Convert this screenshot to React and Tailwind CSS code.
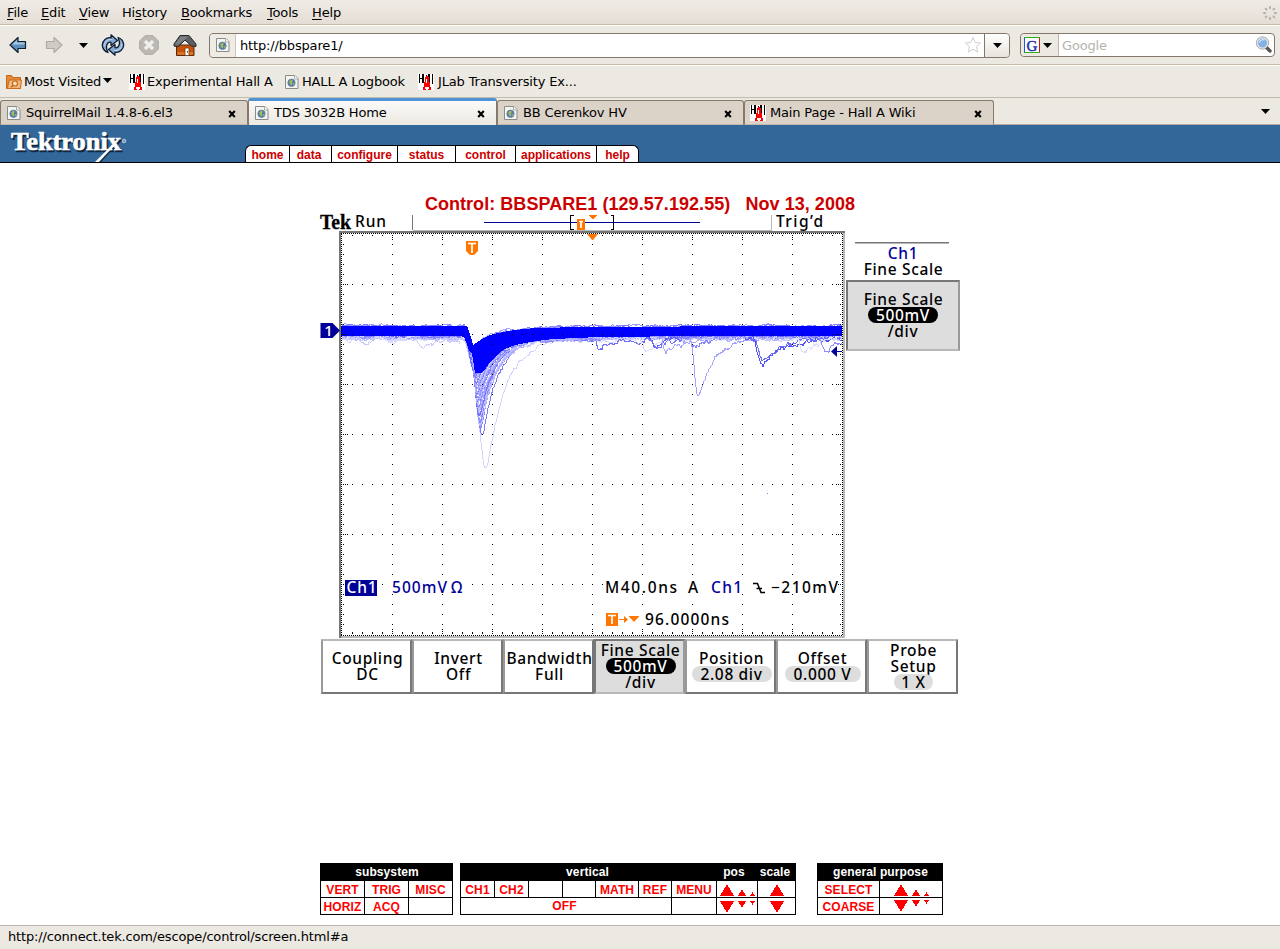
const sans = "font-['DejaVu_Sans',sans-serif]"
const arial = "font-['Liberation_Sans',Arial,sans-serif]"

/* ---------- browser icons ---------- */

function PageIcon({ className = '' }) {
  return (
    <svg width="16" height="16" viewBox="0 0 16 16" className={`shrink-0 ${className}`}>
      <path d="M1.5 1.5h9.5l3 3v10h-12.5z" fill="#f4f4f2" stroke="#8a8c88" />
      <path d="M10.5 1.5v3.5h3.5" fill="#fff" stroke="#a9aba7" />
      <circle cx="7.5" cy="8.8" r="3.7" fill="#4f79b0" stroke="#6d8296" strokeWidth="0.8" />
      <path d="M5.2 7.2l2-1.4 1.7.8-1 1.8.6 1.4-1.2 1.8-1.4-1.6z" fill="#a3bd58" />
      <path d="M9.2 9.3l1.4-.8-.3 2-1.1.8z" fill="#a3bd58" />
    </svg>
  )
}

function HallIcon({ className = '' }) {
  return (
    <svg width="16" height="16" viewBox="0 0 16 16" shapeRendering="crispEdges" className={`shrink-0 ${className}`}>
      <rect width="16" height="16" fill="#fff" />
      <path d="M1 0h1v9h-1zM4 0h2v9h-2zM2 4h2v1h-2zM10 0h2v10h-2zM14 0h1v10h-1zM8 1h1v2h-1z" fill="#000" />
      <path d="M7 2h3v1h1v5h1v5h1v3h-3v-1h1v-2h-4v2h1v1h-3v-3h1v-5h1v-5h1zM8 5v4h1v-4z" fill="#f00" fillRule="evenodd" />
    </svg>
  )
}

function Caret({ className = '' }) {
  return (
    <svg width="9" height="5" viewBox="0 0 9 5" className={`shrink-0 ${className}`}>
      <path d="M0 0h9L4.5 5z" fill="#000" />
    </svg>
  )
}

function BackIcon() {
  return (
    <svg width="18" height="18" viewBox="0 0 18 18">
      <path d="M1 9L9 1.5V5.500h7.500v7H9v4z" fill="#5f8dbd" stroke="#10202f" strokeWidth="1.200" strokeLinejoin="round" />
      <path d="M3 8.500L8 4v2.500h7.500v2z" fill="#a8c5e2" />
    </svg>
  )
}

function ForwardIcon() {
  return (
    <svg width="18" height="18" viewBox="0 0 18 18">
      <path d="M17 9L9 1.500V5.500H1.500v7H9v4z" fill="#cfccc6" stroke="#aeaba5" strokeWidth="1.200" strokeLinejoin="round" />
    </svg>
  )
}

// Two arrows chasing each other; the second is the first turned by 180 degrees.
function ReloadIcon() {
  const arrow = 'M7 18.500C1 16.500-.500 9.500 4 5.500 6 3.800 8.500 3.500 10 4V.800l6.500 5.700-6.500 5V8.300C6.500 7.500 3.800 12 7 18.500z'
  return (
    <svg width="24" height="22" viewBox="0 0 24 22">
      <g fill="#86abd2" stroke="#0d1c30" strokeWidth="1.300" strokeLinejoin="round">
        <path d={arrow} />
        <path d={arrow} transform="rotate(180 12 11)" />
      </g>
      <path d="M3.300 12c-.3-4 2.500-7 7.700-6.500M20.700 10c.3 4-2.500 7-7.700 6.500" fill="none" stroke="#c6daee" />
    </svg>
  )
}

function StopIcon() {
  return (
    <svg width="20" height="20" viewBox="0 0 20 20">
      <path d="M6 .700h8L19.300 6v8L14 19.300H6L.700 14V6z" fill="#bcb8b4" stroke="#aaa6a2" />
      <path d="M6 6l8 8M14 6l-8 8" stroke="#f1efeb" strokeWidth="3.200" />
    </svg>
  )
}

function HomeIcon() {
  return (
    <svg width="24" height="23" viewBox="0 0 24 23">
      <path d="M3.500 11h17.500v10.500H3.500z" fill="#c4520a" stroke="#5a2a08" />
      <path d="M4.500 18h15.500v3H4.500z" fill="#e07422" />
      <path d="M12 14h4v7.500h-4z" fill="#fff" stroke="#7a3a10" strokeWidth=".8" />
      <path d="M14.500 17v1.500" stroke="#333" />
      <path d="M7 1.500h9l7 8.500v2.500l-4.500-.5L12 6 5 12.800l-4-.8v-2z" fill="#5d6063" stroke="#26282a" strokeLinejoin="round" />
      <path d="M7.500 2.500h8l-3 2.500-7 5.500H2z" fill="#7d8184" />
    </svg>
  )
}

function FolderIcon() {
  return (
    <svg width="16" height="16" viewBox="0 0 16 16" className="shrink-0">
      <path d="M.5 14.500v-13h5l1.500 2h7.500v11z" fill="#e58a35" stroke="#c4651a" />
      <path d="M1.500 14.500l1.500-8.500h12.500l-1 8.500z" fill="#f3b878" stroke="#cb6d20" />
      <circle cx="9" cy="9.500" r="2.500" fill="#fbe3c6" stroke="#c4651a" strokeWidth="1.200" />
      <path d="M7 11.500L5 13.300" stroke="#c4651a" strokeWidth="1.400" />
    </svg>
  )
}

function CloseIcon() {
  return (
    <svg width="8" height="8" viewBox="0 0 8 8" className="mt-px shrink-0">
      <path d="M1.200 1l5.600 6M6.800 1L1.200 7" stroke="#000" strokeWidth="2.100" />
    </svg>
  )
}

function Throbber() {
  return (
    <svg width="16" height="16" viewBox="0 0 16 16" className="mt-px">
      {[0, 45, 90, 135, 180, 225, 270, 315].map((a) => (
        <rect key={a} x="7" y="1" width="2" height="3" rx="0.800" fill="#b3afaa" transform={`rotate(${a} 8 8)`} />
      ))}
    </svg>
  )
}

/* ---------- browser chrome ---------- */

const MENU = [
  ['', 'F', 'ile', 'w-[34px]'],
  ['', 'E', 'dit', 'w-[38px]'],
  ['', 'V', 'iew', 'w-[43px]'],
  ['Hi', 's', 'tory', 'w-[59px]'],
  ['', 'B', 'ookmarks', 'w-[86px]'],
  ['', 'T', 'ools', 'w-[45px]'],
  ['', 'H', 'elp', 'w-[40px]'],
]

function MenuBar() {
  return (
    <div className="flex h-[25px] items-center justify-between border-b border-[#c8bba8] bg-gradient-to-b from-[#efece6] to-[#e4ddd5] pl-[7px] pr-[2px]">
      <div className="flex pt-[2px]">
        {MENU.map(([pre, key, post, w]) => (
          <span key={key + post} className={`${w} whitespace-nowrap`}>
            {pre}
            <span className="underline underline-offset-2">{key}</span>
            {post}
          </span>
        ))}
      </div>
      <Throbber />
    </div>
  )
}

function ToolBar() {
  return (
    <div className="flex h-[40px] items-center border-b border-t border-b-[#c8bba8] border-t-white pl-[9px] pr-[5px]">
      <div className="flex w-[200px] items-center">
        <span className="w-[36px]"><BackIcon /></span>
        <span className="w-[34px]"><ForwardIcon /></span>
        <span className="w-[22px]"><Caret /></span>
        <span className="w-[38px]"><ReloadIcon /></span>
        <span className="w-[34px]"><StopIcon /></span>
        <HomeIcon />
      </div>
      <div className="flex h-[25px] w-[801px] items-stretch rounded border border-[#83766a] bg-white">
        <div className="flex w-[26px] items-center justify-center rounded-l border-r border-[#cfc6ba] bg-[#efece6]">
          <PageIcon />
        </div>
        <span className="flex flex-1 items-center pl-[4px] pt-px">http://bbspare1/</span>
        <svg width="18" height="18" viewBox="0 0 18 18" className="mr-[2px] self-center">
          <path d="M9 1.500l2.200 5 5.300.500-4 3.600 1.200 5.400L9 13.200 4.300 16l1.200-5.400-4-3.600 5.300-.5z" fill="#fff" stroke="#cfcfcf" strokeLinejoin="round" />
        </svg>
        <div className="flex w-[25px] items-center justify-center rounded-r border-l border-[#83766a] bg-gradient-to-b from-white to-[#e8e4dd]">
          <Caret />
        </div>
      </div>
      <div className="ml-[10px] flex h-[24px] w-[255px] items-stretch rounded border border-[#83766a] bg-white">
        <div className="flex w-[38px] items-center rounded-l border-r border-[#c0b5a8] bg-[#ece9e2] pl-[3px]">
          <svg width="16" height="16" viewBox="0 0 16 16">
            <path d="M0 0h16v16H0z" fill="#fff" />
            <path d="M.5 16V0" stroke="#1c5bd6" />
            <path d="M0 .5h16M0 15.500h16" stroke="#2fae23" />
            <path d="M15.500 1v14" stroke="#d61a1a" />
            <text x="8" y="13.500" textAnchor="middle" fontSize="15" letterSpacing="0" fill="#1b35a8" fontFamily="Liberation Serif" stroke="#1b35a8" strokeWidth="0.500">G</text>
          </svg>
          <Caret className="ml-[3px]" />
        </div>
        <span className="flex flex-1 items-center pl-[3px] pt-px text-[#b5b2ae]">Google</span>
        <svg width="18" height="18" viewBox="0 0 18 18" className="mr-[1px] self-center">
          <path d="M10.500 10.500l4.500 4.500" stroke="#555" strokeWidth="3.400" strokeLinecap="round" />
          <circle cx="7.500" cy="7" r="5.300" fill="#82b1e4" stroke="#e6e6e6" strokeWidth="1.500" />
          <circle cx="7.500" cy="7" r="6.200" fill="none" stroke="#888" strokeWidth=".7" />
          <path d="M4.500 6.500a3.500 3.500 0 0 1 5-2.500" stroke="#d6e8fa" fill="none" strokeWidth="1.300" />
        </svg>
      </div>
    </div>
  )
}

function BookmarksBar() {
  return (
    <div className="flex h-[33px] items-center border-b border-t border-b-[#c3bbae] border-t-white pl-[6px]">
      <div className="flex w-[123px] items-center">
        <FolderIcon />
        <span className="ml-[2px] whitespace-nowrap">Most Visited</span>
        <Caret className="ml-[2px] -mt-[2px]" />
      </div>
      <div className="flex w-[155px] items-center">
        <HallIcon />
        <span className="ml-[2px] whitespace-nowrap">Experimental Hall A</span>
      </div>
      <div className="flex w-[134px] items-center">
        <PageIcon />
        <span className="ml-[2px] whitespace-nowrap">HALL A Logbook</span>
      </div>
      <div className="flex items-center">
        <HallIcon />
        <span className="ml-[4px] whitespace-nowrap">JLab Transversity Ex...</span>
      </div>
    </div>
  )
}

function Tab({ icon, title, active, width }) {
  return (
    <div
      className={`${width} flex items-center rounded-t-[3px] border-x pl-[5px] pr-[11px] ${
        active
          ? 'h-[27px] border-t-[3px] border-x-[#86786b] border-t-[#4f92d6] bg-gradient-to-b from-[#fbfaf8] to-[#ece9e2]'
          : 'h-[25px] border-b border-t border-[#86786b] border-b-[#c3b8aa] bg-[#dcd3c8] pt-px'
      }`}
    >
      {icon}
      <span className="ml-[4px] flex-1 whitespace-nowrap">{title}</span>
      <CloseIcon />
    </div>
  )
}

function TabStrip() {
  return (
    <div className="flex h-[27px] items-end">
      <Tab width="w-[248px]" icon={<PageIcon />} title="SquirrelMail 1.4.8-6.el3" />
      <Tab width="w-[249px]" icon={<PageIcon />} title="TDS 3032B Home" active />
      <Tab width="w-[247px]" icon={<PageIcon />} title="BB Cerenkov HV" />
      <Tab width="w-[250px]" icon={<HallIcon />} title="Main Page - Hall A Wiki" />
      <div className="flex h-[27px] flex-1 items-center justify-end border-b border-[#b5a999] pr-[10px]">
        <Caret />
      </div>
    </div>
  )
}

/* ---------- Tektronix page header ---------- */

const NAV = [
  ['home', 'w-[44px] rounded-tl-[6px]'],
  ['data', 'w-[42px] pr-[3px]'],
  ['configure', 'w-[66px]'],
  ['status', 'w-[58px]'],
  ['control', 'w-[60px]'],
  ['applications', 'w-[81px]'],
  ['help', 'w-[43px] rounded-tr-[6px] border-r'],
]

function SiteHeader() {
  return (
    <div className="flex h-[38px] items-end border-b border-black bg-[#336699]">
      <svg width="245" height="37" viewBox="0 0 245 37">
        <g fontFamily="Liberation Serif" fontWeight="bold" fontSize="25" letterSpacing="0">
          <text x="12.500" y="27" textLength="110" lengthAdjust="spacingAndGlyphs" fill="#12263c" stroke="#12263c" strokeWidth="0.600">Tektronix</text>
          <path d="M109 25L97 37h4l11-12z" fill="#12263c" />
          <text x="11" y="25" textLength="110" lengthAdjust="spacingAndGlyphs" fill="#fff" stroke="#fff" strokeWidth="0.600">Tektronix</text>
        </g>
        <path d="M112 20L95 37h4l15-16z" fill="#fff" />
        <circle cx="124" cy="16" r="1.800" fill="#7895b5" stroke="#b9cbe0" />
      </svg>
      <div className={`flex h-[17px] ${arial} text-[12px] font-bold leading-[18px] tracking-normal text-[#cc0000]`}>
        {NAV.map(([label, cls]) => (
          <span key={label} className={`${cls} border-l border-t border-black bg-white text-center`}>
            {label}
          </span>
        ))}
      </div>
    </div>
  )
}

/* ---------- oscilloscope screen ---------- */

function makeRandom(seed) {
  let s = seed
  return () => {
    s = (s * 16807) % 2147483647
    return s / 2147483647
  }
}

// One acquisition: flat line with noise plus any number of decaying pulses.
function trace(seed, base, noise, pulses, from = 342, to = 842) {
  const rnd = makeRandom(seed * 7919 + 13)
  for (let i = 0; i < 5; i += 1) rnd()
  let d = ''
  let drift = 0
  for (let x = from; x <= to; x += 1) {
    drift = drift * 0.85 + (rnd() - 0.5) * noise
    let y = base + drift + (rnd() - 0.5) * noise * 0.8
    for (const [x0, xp, depth, tau] of pulses) {
      if (x > x0 && x <= xp) {
        const t = (x - x0) / (xp - x0)
        y += depth * t * t * (3 - 2 * t)
      } else if (x > xp) {
        const t = (x - xp) / tau
        y += depth * (t < 0.1 ? 1 - t * 0.3 : Math.exp(-(t - 0.07)))
      }
    }
    d += `${x === from ? 'M' : 'L'}${x} ${y.toFixed(1)}`
  }
  return d
}

const SHADES = ['#b4b4ff', '#9a9aff', '#8282fa', '#c6c6ff', '#a6a6ff', '#7070f8', '#bcbcff']

const BASELINE = Array.from({ length: 16 }, (_, i) => ({
  d: trace(i + 3, 338.5 - (i % 8) * 0.5, 2.3, [[464, 475, 24 + i, 26]]),
  c: ['#d6d6ff', '#c6c6ff', '#b2b2ff', '#d0d0ff', '#a4a4ff', '#9090ff', '#8080ff', '#6868ff'][i % 8],
}))

const TOP_FRINGE = [
  { d: trace(40, 325.5, 1.6, [], 342, 465), c: '#a0a0ff' },
  { d: trace(41, 325.5, 1.6, [], 342, 465), c: '#8080ff' },
  { d: trace(42, 326, 1.6, [[470, 478, 15, 24]], 482, 842), c: '#a0a0ff' },
  { d: trace(43, 326, 1.6, [[470, 478, 15, 24]], 482, 842), c: '#8080ff' },
]

// Deep pulses first so that the dense shallow ones end up on top.
const DECAY = Array.from({ length: 40 }, (_, k) => {
  const i = 39 - k
  const depth = i < 28 ? 34 + i * 1.1 : 65 + (i - 28) * 2.2
  return {
    d: trace(i + 90, 338, 2, [[469, 475 + (depth - 34) / 10, depth, 13 + (i % 6)]], 468, 600),
    c: SHADES[i % 7],
  }
})

const PULSES = [
  { d: trace(203, 338, 2.2, [[469, 486, 130, 19]], 468, 640), c: '#d4d4ff' },
  { d: trace(201, 337, 2, [[469, 480, 76, 14]], 468, 590), c: '#a0a0ff' },
  { d: trace(204, 337, 2, [[469, 481, 88, 13]], 468, 590), c: '#8c8cff' },
  { d: trace(202, 337, 2, [[469, 482, 99, 16]], 468, 590), c: '#7c7cf6' },
  { d: trace(205, 339, 2.5, [[412, 424, 6, 14]], 400, 460), c: '#d0d0ff' },
  { d: trace(206, 338, 2.5, [[355, 365, 4, 8]], 342, 400), c: '#c8c8ff' },
  { d: trace(216, 338, 2.5, [[381, 391, 4, 8]], 375, 410), c: '#dcdcff' },
  { d: trace(207, 337, 3, [[594, 599, 13, 14]], 590, 650), c: '#7070f8' },
  { d: trace(208, 338, 3.5, [[640, 646, 13, 9]], 636, 672), c: '#dcdcff' },
  { d: trace(209, 337, 3.5, [[649, 655, 11, 9]], 646, 680), c: '#5a5af4' },
  { d: trace(217, 337, 3.5, [[651, 658, 9, 12]], 646, 690), c: '#7474ff' },
  { d: trace(210, 338, 3.5, [[660, 666, 17, 15]], 656, 710), c: '#a8a8ff' },
  { d: trace(218, 338, 3.5, [[690, 694, 9, 15]], 684, 740), c: '#8484ff' },
  { d: trace(211, 338, 2.6, [[690, 698, 57, 15]], 686, 770), c: '#a4a4ff' },
  { d: trace(212, 338, 3, [[753, 762, 27, 18]], 745, 842), c: '#5252fa' },
  { d: trace(213, 338, 3, [[755, 763, 24, 17]], 750, 842), c: '#6c6cff' },
  { d: trace(214, 338, 3.5, [[798, 803, 16, 14]], 794, 842), c: '#dedeff' },
  { d: trace(215, 337, 3, [[818, 825, 12, 12]], 812, 842), c: '#8c8cff' },
]

const BAND =
  'M341 326H466L468 328L471 337L473 345L476 343L482 339L490 335L503 332L515 330L530 328.500L560 327.500L600 327L680 326.500L842 326' +
  'V336H700L600 337L553 339L530 342L515 345L505 349L498 354L491 361L486 368L481 373H475L474 366L472 354L469 350L466 342L464 337L460 336H341Z'

function range(n) {
  return Array.from({ length: n }, (_, i) => i)
}

// Graticule dots: 10 px minor divisions, 50 px major ones, dotted frame.
const GRID_DOTS = (() => {
  let d = ''
  const dot = (x, y) => {
    d += `M${x} ${y}h1v1h-1z`
  }
  for (const row of range(7)) for (const i of range(49)) dot(352 + i * 10, 284 + row * 50)
  for (const col of range(9)) for (const i of range(39)) if ((i + 1) % 5) dot(392 + col * 50, 244 + i * 10)
  for (const i of range(251)) {
    dot(341 + i * 2, 233)
    dot(341 + i * 2, 635)
  }
  for (const i of range(201)) {
    dot(341, 234 + i * 2)
    dot(842, 234 + i * 2)
  }
  for (const i of range(49)) {
    const x = 352 + i * 10
    const major = (i + 1) % 5 === 0
    for (const k of range(major ? 3 : 1)) {
      dot(x, 235 + k * 2)
      dot(x, 633 - k * 2)
    }
    if (!major) dot(x, 632)
  }
  for (const i of range(39)) {
    const y = 244 + i * 10
    for (const k of range((i + 1) % 5 === 0 ? 3 : 1)) {
      dot(343 + k * 2, y)
      dot(840 - k * 2, y)
    }
  }
  return d
})()

function ScopeText({ x, y, w, fill = '#000', children }) {
  return (
    <text x={x} y={y} textLength={w} fill={fill} fontSize="15.500" fontWeight="500" fontFamily="Noto Sans, DejaVu Sans, sans-serif">
      {children}
    </text>
  )
}

function TBadge({ x, y, w, h, pointed }) {
  const m = x + w / 2
  return (
    <g>
      <path
        d={pointed ? `M${x} ${y}h${w}v${h - 4}L${m + 2} ${y + h}h-4L${x} ${y + h - 4}z` : `M${x} ${y}h${w}v${h}h${-w}z`}
        fill="#ff7700"
      />
      <path d={`M${x + 2} ${y + 2.5}h${w - 4}M${m} ${y + 2}v${h - 4}`} stroke="#fff" strokeWidth="1.700" />
    </g>
  )
}

function ScopeScreen() {
  return (
    <svg width="526" height="425" viewBox="320 213 526 425" className="shrink-0 overflow-visible" letterSpacing="0">
      <text x="320" y="229" textLength="31" lengthAdjust="spacingAndGlyphs" fontFamily="Liberation Serif" fontWeight="bold" fontSize="20.500" stroke="#000" strokeWidth="0.300">Tek</text>
      <ScopeText x="355" y="227" w="31">Run</ScopeText>
      <ScopeText x="776" y="227" w="47">Trig’d</ScopeText>

      <g shapeRendering="crispEdges">
        <path d="M412 215h1v15h-1z" fill="#777" />
        <path d="M413 230h358v1h-358zM771 215h1v16h-1z" fill="#b8b8b8" />
        <path d="M484 222h216v1h-216z" fill="#000099" />
        <path d="M573.500 215.500h-3v14h3M610.500 215.500h3v14h-3" fill="none" stroke="#000" />
        <path d="M588 215h9l-4 4h-1z" fill="#ff7700" />
        <path d="M339 231h506v2h-506zM339 231h2v407h-2z" fill="#777" />
        <path d="M843 233h2v405h-2zM341 636h504v2h-504z" fill="#b8b8b8" />
      </g>
      <TBadge x={577} y={219} w={8} h={11} />

      <g fill="none" strokeWidth="1" shapeRendering="crispEdges">
        {[...BASELINE, ...PULSES, ...DECAY, ...TOP_FRINGE].map((t, i) => (
          <path key={i} d={t.d} stroke={t.c} />
        ))}
      </g>
      <path d={BAND} fill="#0000ff" shapeRendering="crispEdges" />
      <path d={GRID_DOTS} fill="#000" shapeRendering="crispEdges" />
      <path d="M767 493h1v1h-1z" fill="#8080ff" />

      <path d="M587 234h11l-5 6h-1z" fill="#ff7700" />
      <TBadge x={466} y={241} w={12} h={14} pointed />
      <path d="M320.500 323h12l7.500 7.500-7.500 7.500h-12z" fill="#000099" />
      <text x="328.500" y="336" textAnchor="middle" fill="#fff" fontSize="15" fontWeight="500" fontFamily="Noto Sans">1</text>
      <path d="M831 351.500l6-5.500v11zM837 351h5v1h-5z" fill="#000099" />

      <g>
        <path d="M345 580h32v16h-32z" fill="#000099" />
        <path d="M386 583h80v3h-80zM604 583h234v3h-234zM692 578h1v18h-1zM642 611h1v17h-1zM692 611h1v17h-1z" fill="#fff" />
        <ScopeText x="346.500" y="593" w="30" fill="#fff">Ch1</ScopeText>
        <ScopeText x="392" y="593" w="55" fill="#000099">500mV</ScopeText>
        <ScopeText x="451" y="593" w="13" fill="#000099">Ω</ScopeText>
        <ScopeText x="605" y="593" w="72">M40.0ns</ScopeText>
        <ScopeText x="688" y="593" w="12">A</ScopeText>
        <ScopeText x="711" y="593" w="31" fill="#000099">Ch1</ScopeText>
        <path d="M753 583.500h4.500l3.500 9h4M756.500 588.500h5.500" fill="none" stroke="#000" strokeWidth="1.500" />
        <ScopeText x="771" y="593" w="67">−210mV</ScopeText>
        <TBadge x={606} y={613} w={12} h={13} />
        <path d="M619 619h5v-3l4 3.500-4 3.500v-3h-5zM628.500 616h11l-5.500 6z" fill="#ff7700" />
        <ScopeText x="645" y="625" w="84">96.0000ns</ScopeText>
      </g>
    </svg>
  )
}

const scopeFont = "font-['Noto_Sans','DejaVu_Sans',sans-serif] text-[15.5px] font-medium leading-[16px] tracking-[0.65px]"

function SideMenu() {
  return (
    <div className={`flex w-[114px] flex-col items-center pt-[29px] text-center ${scopeFont}`}>
      <div className="mr-[2px] h-[2px] w-[94px] border-b border-t border-b-[#b8b8b8] border-t-[#777]" />
      <div className="mt-px text-[#000099]">Ch1</div>
      <div className="pl-px">Fine Scale</div>
      <div className="mt-[3px] flex h-[71px] w-[114px] flex-col items-center border-2 border-b-[#b8b8b8] border-l-[#777] border-r-[#999] border-t-[#777] bg-[#dddddd] pt-[9px]">
        <span className="pl-px">Fine Scale</span>
        <span className="h-[16px] w-[70px] rounded-full bg-black text-white">500mV</span>
        <span>/div</span>
      </div>
    </div>
  )
}

const KEYS = [
  { lines: ['Coupling', 'DC'] },
  { lines: ['Invert', 'Off'] },
  { lines: ['Bandwidth', 'Full'] },
  { lines: ['Fine Scale', '500mV', '/div'], selected: true },
  { lines: ['Position', '2.08 div'], value: 1, pill: 'w-[80px]' },
  { lines: ['Offset', '0.000 V'], value: 1, pill: 'w-[76px]' },
  { lines: ['Probe', 'Setup', '1 X'], value: 2, pill: 'w-[39px]' },
]

function SoftKeys() {
  return (
    <div className={`ml-px mt-px flex h-[55px] w-[637px] ${scopeFont}`}>
      {KEYS.map(({ lines, selected, value, pill }) => (
        <div
          key={lines[0]}
          className={`flex w-[91px] flex-col items-center justify-center whitespace-nowrap border-2 pb-[2px] pl-[2px] ${
            selected
              ? 'border-b-[#b8b8b8] border-l-[#777] border-r-[#999] border-t-[#777] bg-[#dddddd]'
              : 'border-b-[#777] border-l-[#999] border-r-[#777] border-t-[#b8b8b8] bg-white'
          }`}
        >
          {lines.map((line, i) => {
            if (selected && i === 1) {
              return <span key={line} className="h-[16px] w-[70px] rounded-full bg-black text-center text-white">{line}</span>
            }
            if (value === i) {
              return <span key={line} className={`${pill} h-[16px] rounded-full bg-[#dddddd] text-center`}>{line}</span>
            }
            return <span key={line}>{line}</span>
          })}
        </div>
      ))}
    </div>
  )
}

/* ---------- control pads ---------- */

function Cell({ w, children }) {
  return (
    <div className={`${w} flex h-[17px] items-center justify-center border-b border-r border-black pt-px`}>{children}</div>
  )
}

function Arrows({ down, sizes }) {
  let x = 0
  const tris = sizes.map((w) => {
    const h = w > 10 ? 12 : w > 6 ? 7 : 4
    const d = down ? `M${x} 0h${w}L${x + w / 2} ${h}z` : `M${x} 12h${w}L${x + w / 2} ${12 - h}z`
    x += w + 4
    return d
  })
  return (
    <svg width={x - 4} height="12" viewBox={`0 0 ${x - 4} 12`} shapeRendering="crispEdges" className="shrink-0">
      <path d={tris.join('')} fill="#f00" />
    </svg>
  )
}

function ControlPads() {
  return (
    <div className={`flex ${arial} text-[12px] font-bold leading-none tracking-[0.1px] text-[#ff0000]`}>
      <div className="w-[133px] border-l border-black">
        <div className="h-[18px] bg-black text-center leading-[18px] text-white">subsystem</div>
        <div className="flex">
          <Cell w="w-[44px]">VERT</Cell>
          <Cell w="w-[44px]">TRIG</Cell>
          <Cell w="w-[44px]">MISC</Cell>
        </div>
        <div className="flex">
          <Cell w="w-[44px]">HORIZ</Cell>
          <Cell w="w-[44px]">ACQ</Cell>
          <Cell w="w-[44px]" />
        </div>
      </div>

      <div className="ml-[7px] w-[336px] border-l border-black">
        <div className="flex h-[18px] bg-black text-center leading-[19px] text-white">
          <span className="w-[253px]">vertical</span>
          <span className="w-[40px]">pos</span>
          <span className="w-[42px]">scale</span>
        </div>
        <div className="flex">
          <Cell w="w-[34px]">CH1</Cell>
          <Cell w="w-[34px]">CH2</Cell>
          <Cell w="w-[34px]" />
          <Cell w="w-[33px]" />
          <Cell w="w-[43px]">MATH</Cell>
          <Cell w="w-[33px]">REF</Cell>
          <Cell w="w-[45px]">MENU</Cell>
          <Cell w="w-[41px]"><Arrows sizes={[14, 8, 5]} /></Cell>
          <Cell w="w-[38px]"><Arrows sizes={[14]} /></Cell>
        </div>
        <div className="flex">
          <Cell w="w-[211px]"><span className="pb-px pr-[3px]">OFF</span></Cell>
          <Cell w="w-[45px]" />
          <Cell w="w-[41px]"><Arrows down sizes={[14, 8, 5]} /></Cell>
          <Cell w="w-[38px]"><Arrows down sizes={[14]} /></Cell>
        </div>
      </div>

      <div className="ml-[21px] w-[126px] border-l border-black">
        <div className="h-[18px] bg-black text-center leading-[18px] text-white">general purpose</div>
        <div className="flex">
          <Cell w="w-[62px]">SELECT</Cell>
          <Cell w="w-[63px]"><Arrows sizes={[14, 8, 5]} /></Cell>
        </div>
        <div className="flex">
          <Cell w="w-[62px]">COARSE</Cell>
          <Cell w="w-[63px]"><span className="pb-[2px]"><Arrows down sizes={[14, 8, 5]} /></span></Cell>
        </div>
      </div>
    </div>
  )
}

export default function App() {
  return (
    <div className={`flex h-[949px] w-[1280px] flex-col overflow-hidden bg-[#ece9e2] ${sans} text-[13px] leading-4 tracking-[-0.16px] text-black`}>
      <MenuBar />
      <ToolBar />
      <BookmarksBar />
      <TabStrip />
      <div className="flex h-[800px] flex-col bg-white">
        <SiteHeader />
        <h1 className={`mt-[32px] h-[18px] whitespace-pre text-center ${arial} text-[18px] font-bold leading-[18px] tracking-[0.05px] text-[#cc0000]`}>
          {'Control: BBSPARE1 (129.57.192.55)\u00a0\u00a0 Nov 13, 2008'}
        </h1>
        <div className="ml-[320px] flex">
          <ScopeScreen />
          <SideMenu />
        </div>
        <div className="ml-[320px]">
          <SoftKeys />
        </div>
        <div className="ml-[320px] mt-[169px]">
          <ControlPads />
        </div>
      </div>
      <div className="flex flex-1 items-center border-t border-[#b9b5ae] pb-[2px] pl-[8px]">
        http://connect.tek.com/escope/control/screen.html#a
      </div>
    </div>
  )
}
